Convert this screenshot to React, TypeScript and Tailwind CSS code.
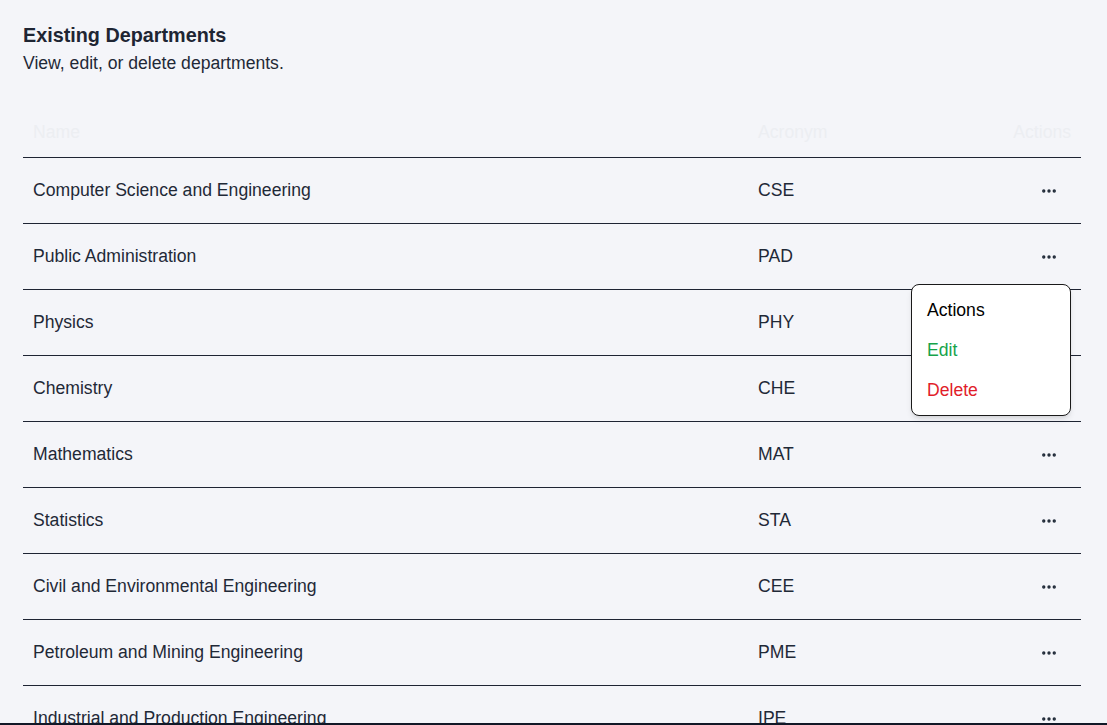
import { Ellipsis } from 'lucide-react'

const departments = [
  { name: 'Computer Science and Engineering', acronym: 'CSE' },
  { name: 'Public Administration', acronym: 'PAD' },
  { name: 'Physics', acronym: 'PHY' },
  { name: 'Chemistry', acronym: 'CHE' },
  { name: 'Mathematics', acronym: 'MAT' },
  { name: 'Statistics', acronym: 'STA' },
  { name: 'Civil and Environmental Engineering', acronym: 'CEE' },
  { name: 'Petroleum and Mining Engineering', acronym: 'PME' },
  { name: 'Industrial and Production Engineering', acronym: 'IPE' },
]

export default function App() {
  return (
    <div className="h-[725px] overflow-hidden bg-[#f4f5f9] border-b-2 border-[#111827] font-['Liberation_Sans',Arial,sans-serif] text-[#1f2937]">
      <div className="relative px-[23px] pt-[21px]">
        {/* Heading */}
        <h2 className="text-[19.8px] leading-7 font-bold text-[#1e2533]">Existing Departments</h2>
        <p className="mt-[2px] text-[17.6px] leading-6 text-[#1f2937]">View, edit, or delete departments.</p>

        {/* Table */}
        <div className="mt-[33px] w-[1058px]">
          <div className="flex h-[50px] items-center border-b border-[#1e2433] text-[17.6px] text-[#eceef2]">
            <div className="w-[725px] pl-2.5">Name</div>
            <div className="flex-1 pl-2.5">Acronym</div>
            <div className="w-[120px] pr-2.5 text-right">Actions</div>
          </div>
          {departments.map((d) => (
            <div key={d.acronym} className="flex h-[66px] items-center border-b border-[#1e2433] text-[17.6px]">
              <div className="w-[725px] pl-2.5">{d.name}</div>
              <div className="flex-1 pl-2.5">{d.acronym}</div>
              <div className="flex w-[120px] justify-end pr-4">
                <button className="flex h-8 w-8 items-center justify-center text-[#1f2937]">
                  <Ellipsis className="size-[18px]" strokeWidth={2.5} />
                </button>
              </div>
            </div>
          ))}
        </div>

        {/* Open actions menu */}
        <div className="absolute left-[911px] top-[284px] w-[160px] rounded-lg border border-[#1a1a1a] bg-white py-[5px] px-[4px] shadow-md">
          <div className="flex h-10 items-center pl-[11px] text-[17.6px] text-black">Actions</div>
          <div className="flex h-10 items-center pl-[11px] text-[17.6px] text-[#16a34a]">Edit</div>
          <div className="flex h-10 items-center pl-[11px] text-[17.6px] text-[#e11d2a]">Delete</div>
        </div>
      </div>
    </div>
  )
}
